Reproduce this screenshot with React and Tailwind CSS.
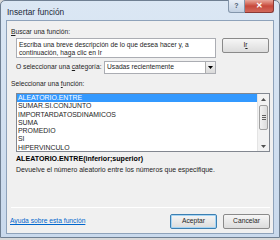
import React from 'react'

const FUNCS = [
  'ALEATORIO.ENTRE',
  'SUMAR.SI.CONJUNTO',
  'IMPORTARDATOSDINAMICOS',
  'SUMA',
  'PROMEDIO',
  'SI',
  'HIPERVINCULO',
]

function WinButton({ children, primary }) {
  return (
    <div
      className={`w-[47px] h-[15px] flex items-center justify-center rounded-[2px] border text-[6.7px] text-[#1e1e1e] bg-gradient-to-b from-[#f6f6f6] to-[#dcdcdc] ${
        primary ? 'border-[#3c7fb1] shadow-[inset_0_0_0_1px_#a6d5f5]' : 'border-[#8a8a8a]'
      }`}
    >
      {children}
    </div>
  )
}

export default function App() {
  return (
    <div className="w-[280px] h-[240px] bg-[#d8d8d8] overflow-hidden" style={{ fontFamily: '"Liberation Sans", Arial, sans-serif' }}>
      {/* window frame */}
      <div className="w-[280px] h-[238px] border border-[#6f7f92] rounded-t-[5px] bg-gradient-to-b from-[#dbe7f4] to-[#c9d9ec] flex flex-col px-[5px] pb-[3px]">
        {/* title bar */}
        <div className="h-[19px] flex items-start justify-between">
          <span className="text-[8.3px] text-[#1c2a3a] pl-[1px] pt-[5px]">Insertar función</span>
          <div className="flex -mt-px">
            <div className="w-[17px] h-[13px] flex items-center justify-center rounded-bl-[3px] border border-[#8496ab] border-t-0 bg-gradient-to-b from-[#e9eff7] to-[#c3d1e2] text-[7px] text-[#4b5b70] font-bold">?</div>
            <div className="w-[29px] h-[13px] flex items-center justify-center rounded-br-[3px] border border-[#8a3a36] border-t-0 border-l-0 bg-gradient-to-b from-[#e8a79b] via-[#c7483b] to-[#d2695c] text-[8px] text-white font-bold">✕</div>
          </div>
        </div>

        {/* client area */}
        <div className="flex-1 border border-[#8ea2ba] bg-[#f0f0f0] flex flex-col pl-[4px] pr-[3px] text-[6.7px] text-[#1e1e1e]">
          <div className="mt-[7px] h-[8px] leading-[8px]">
            <span className="underline">B</span>uscar una función:
          </div>

          <div className="mt-[2px] ml-[5px] flex items-start gap-[6px]">
            <div className="w-[200px] h-[20px] border border-[#abadb3] bg-white px-[2px] pt-[2px] leading-[8px]">
              Escriba una breve descripción de lo que desea hacer y, a<br />continuación, haga clic en Ir
            </div>
            <WinButton>
              I<span className="underline">r</span>
            </WinButton>
          </div>

          <div className="mt-[3px] ml-[5px] flex items-center">
            <span className="w-[88px]">
              O seleccionar una <span className="underline">c</span>ategoría:
            </span>
            <div className="w-[112px] h-[13px] border border-[#abadb3] bg-white flex items-center justify-between">
              <span className="pl-[2px]">Usadas recientemente</span>
              <div className="w-[10px] h-[11px] border-l border-[#acacac] bg-gradient-to-b from-[#f4f4f4] to-[#dadada] flex items-center justify-center">
                <svg width="5" height="3" viewBox="0 0 5 3"><path d="M0 0h5L2.5 3z" fill="#000" /></svg>
              </div>
            </div>
          </div>

          <div className="mt-[6px] h-[8px] leading-[8px]">
            Seleccionar una <span className="underline">f</span>unción:
          </div>

          {/* list box */}
          <div className="mt-[5px] ml-[5px] w-[254px] h-[59px] border border-[#828790] bg-white flex">
            <div className="flex-1 flex flex-col">
              {FUNCS.map((f, i) => (
                <div
                  key={f}
                  className={`h-[8.3px] leading-[8.3px] pl-[1px] text-[6.9px] ${
                    i === 0 ? 'bg-[#3399ff] text-white' : 'text-[#1e1e1e]'
                  }`}
                >
                  {f}
                </div>
              ))}
            </div>
            <div className="w-[12px] bg-[#f2f2f2] border-l border-[#e4e4e4] flex flex-col items-center">
              <div className="h-[10px] flex items-center justify-center">
                <svg width="5" height="3" viewBox="0 0 5 3"><path d="M0 3h5L2.5 0z" fill="#505050" /></svg>
              </div>
              <div className="w-[9px] h-[25px] mt-[1px] rounded-[2px] border border-[#a0a0a0] bg-gradient-to-r from-[#f2f2f2] to-[#dcdcdc] flex flex-col items-center justify-center gap-[1px]">
                <div className="w-[4px] h-px bg-[#606060]" />
                <div className="w-[4px] h-px bg-[#606060]" />
                <div className="w-[4px] h-px bg-[#606060]" />
              </div>
              <div className="flex-1" />
              <div className="h-[10px] flex items-center justify-center">
                <svg width="5" height="3" viewBox="0 0 5 3"><path d="M0 0h5L2.5 3z" fill="#505050" /></svg>
              </div>
            </div>
          </div>

          <div className="mt-[3px] ml-[5px] h-[9px] leading-[9px] font-bold text-[7.1px] text-black">
            ALEATORIO.ENTRE(inferior;superior)
          </div>
          <div className="mt-[1px] ml-[5px] h-[9px] leading-[9px] text-[6.9px]">
            Devuelve el número aleatorio entre los números que especifique.
          </div>

          <div className="flex-1" />
          <div className="h-px bg-[#dcdcdc] border-b border-white" />

          <div className="mt-[6px] mb-[4px] flex items-center justify-between">
            <span className="text-[#0066cc] underline -ml-px">Ayuda sobre esta función</span>
            <div className="flex gap-[6px]">
              <WinButton primary>Aceptar</WinButton>
              <WinButton>Cancelar</WinButton>
            </div>
          </div>
        </div>
      </div>
    </div>
  )
}
